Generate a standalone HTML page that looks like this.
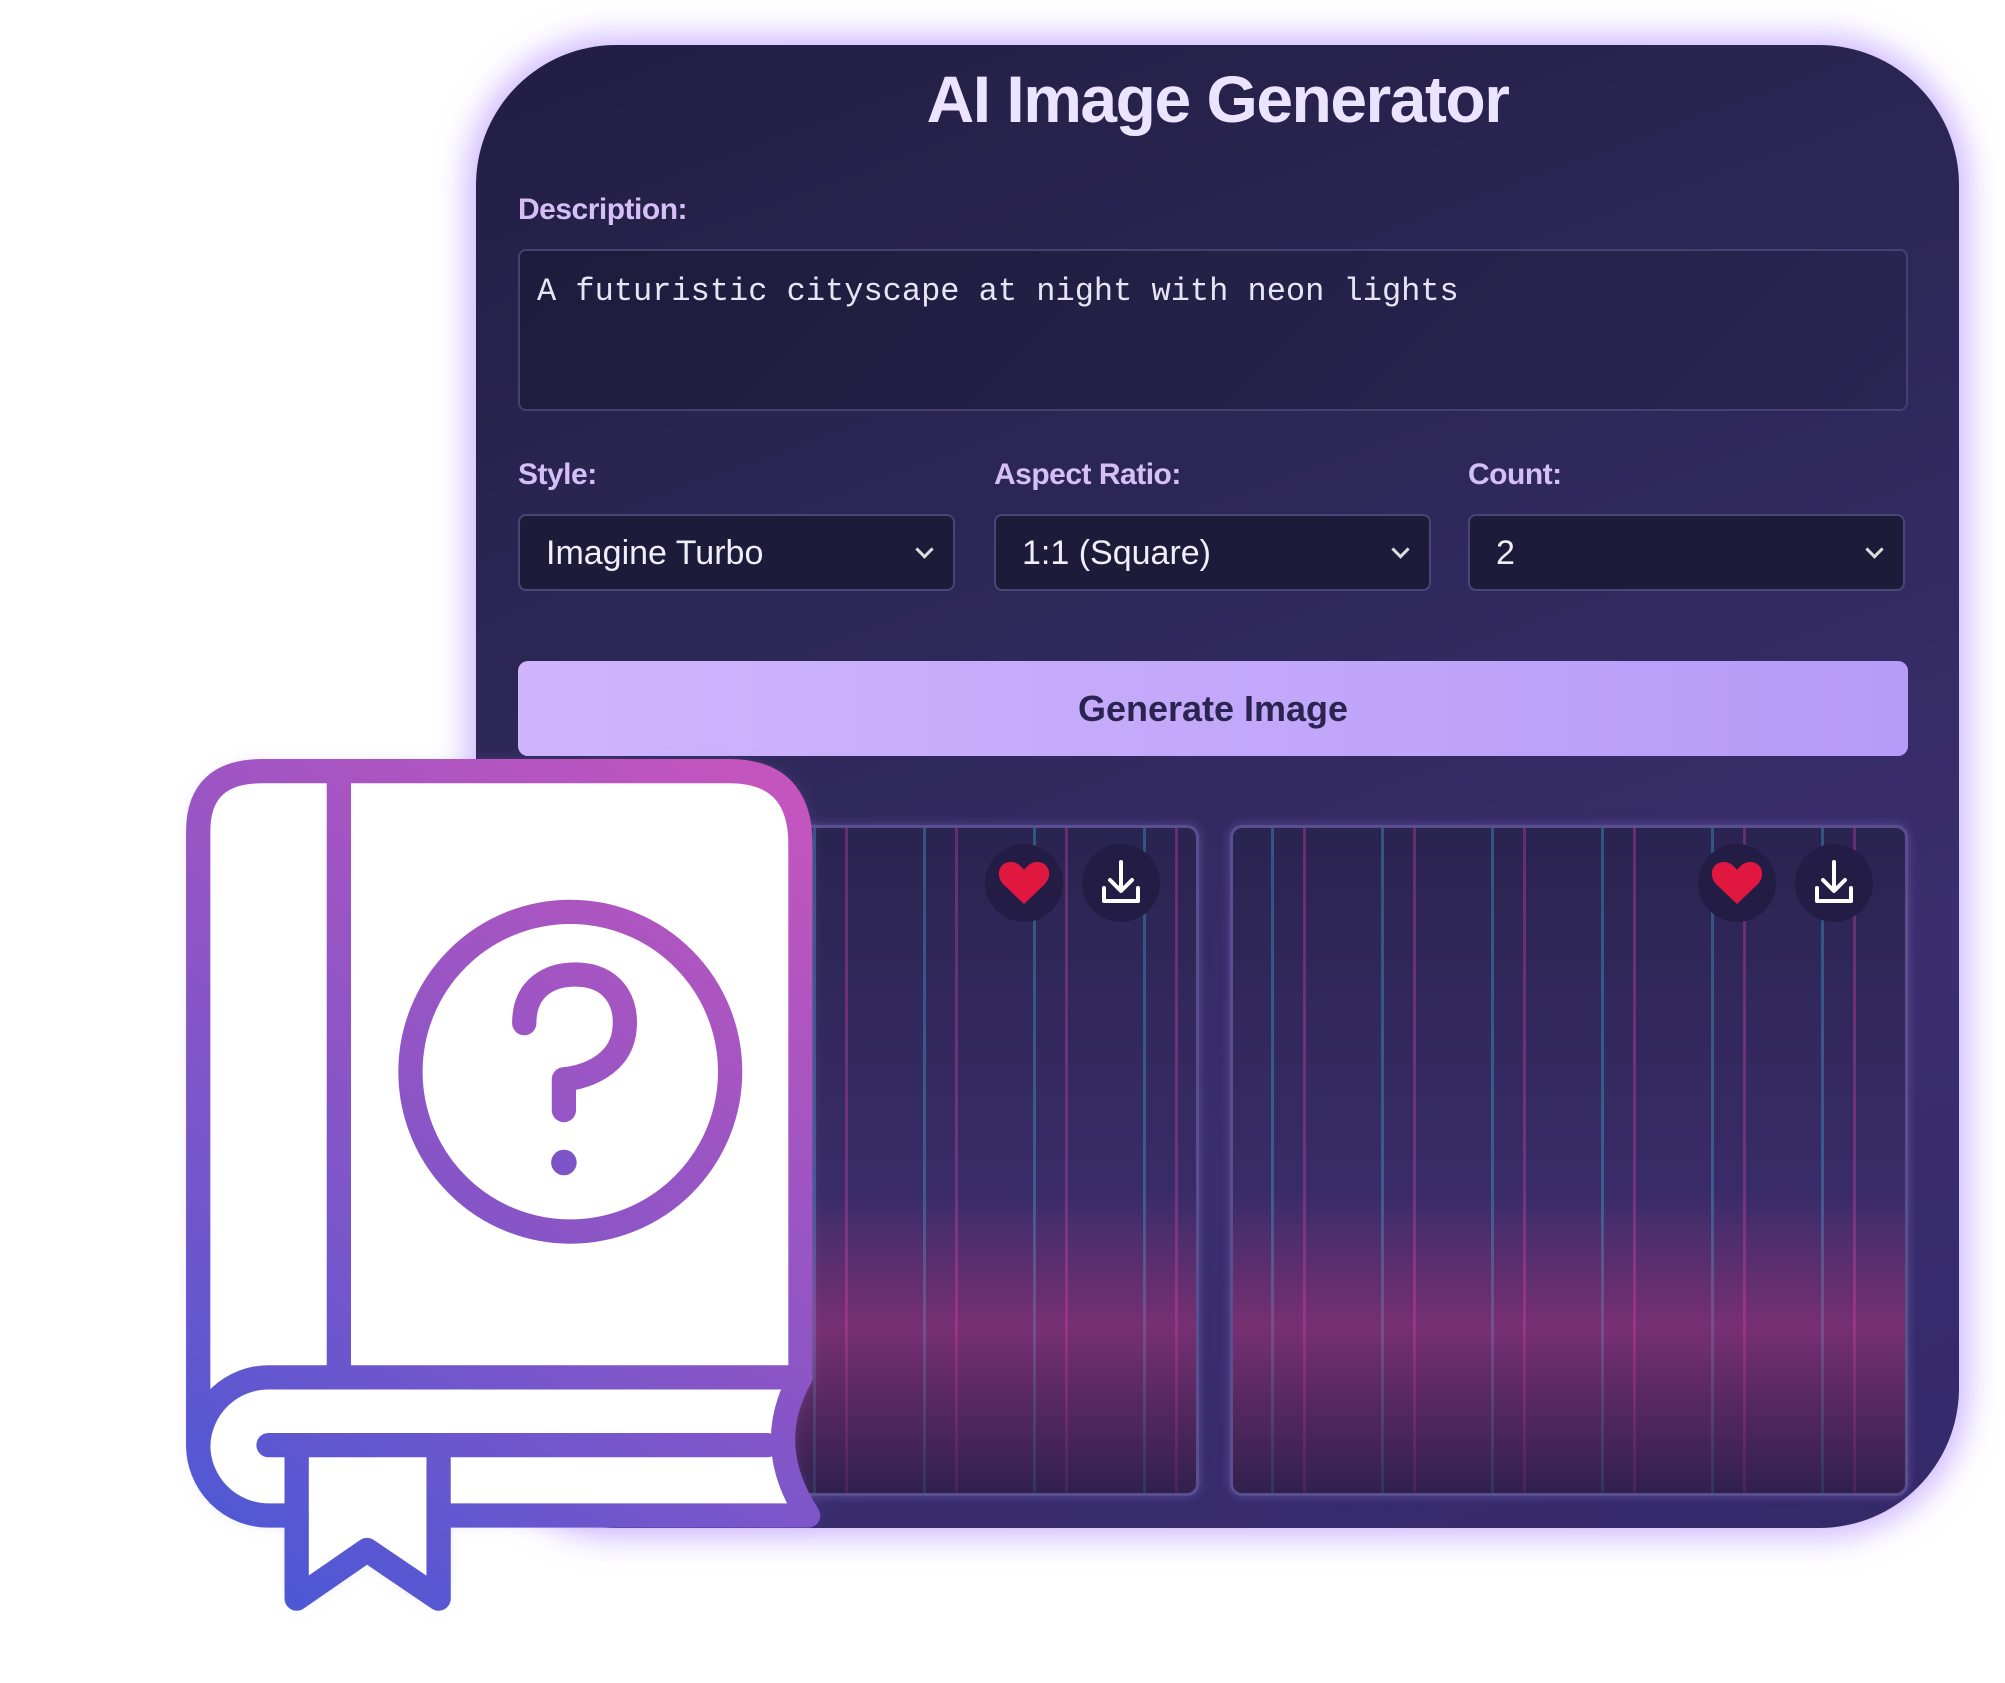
<!DOCTYPE html>
<html><head><meta charset="utf-8">
<style>
html,body{margin:0;padding:0;background:#fff;}
body{width:2005px;height:1683px;position:relative;overflow:hidden;font-family:"Liberation Sans",sans-serif;}
.panel{position:absolute;left:476px;top:45px;width:1483px;height:1483px;border-radius:140px;
background:linear-gradient(160deg,#221e42 0%,#2d2757 35%,#3a2e6e 70%,#34296a 100%);
box-shadow:0 0 30px 10px rgba(170,130,255,0.55);}
.title{position:absolute;left:0;width:100%;top:16px;text-align:center;color:#ece4ff;font-weight:bold;font-size:66px;letter-spacing:-1.5px;}
.lbl{position:absolute;color:#d4bff6;font-weight:bold;font-size:30px;letter-spacing:-0.5px;}
.ta{position:absolute;left:42px;top:204px;width:1386px;height:158px;border:2px solid #464070;border-radius:8px;background:linear-gradient(135deg,#1e1b3c,#2a2552);}
.ta span{position:absolute;left:17px;top:22px;color:#e8e4f4;font-family:"Liberation Mono",monospace;font-size:32px;}
.sel{position:absolute;top:469px;width:437px;height:77px;border:2px solid #4b4575;border-radius:8px;background:#1d1b39;color:#f0eef8;font-size:34px;line-height:75px;box-sizing:border-box;padding-left:26px;}
.sel:after{content:"";position:absolute;right:22px;top:27px;width:10px;height:10px;border-right:3px solid #ddd;border-bottom:3px solid #ddd;transform:rotate(45deg);}
.btn{position:absolute;left:42px;top:616px;width:1390px;height:95px;border-radius:10px;background:linear-gradient(90deg,#d0b5fc,#b69bf8);color:#2a2450;font-weight:bold;font-size:36px;text-align:center;line-height:95px;}
.card{position:absolute;top:780px;height:665px;border-radius:12px;border:3px solid #5a4f8e;overflow:hidden;box-shadow:0 0 10px rgba(150,120,230,.4);
background:
linear-gradient(180deg,rgba(40,30,80,0) 55%,rgba(230,60,140,.35) 75%,rgba(40,30,70,.6) 100%),
repeating-linear-gradient(90deg,transparent 0 38px,rgba(60,200,240,.3) 38px 41px,transparent 41px 70px,rgba(240,70,190,.3) 70px 73px,transparent 73px 110px),
linear-gradient(180deg,#2a2450,#3b2c6a 60%,#3d2458);}
.ic{position:absolute;top:16px;width:78px;height:78px;border-radius:50%;background:#231d45;}
</style></head><body>
<div class="panel">
 <div class="title">AI Image Generator</div>
 <div class="lbl" style="left:42px;top:148px">Description:</div>
 <div class="ta"><span>A futuristic cityscape at night with neon lights</span></div>
 <div class="lbl" style="left:42px;top:413px">Style:</div>
 <div class="lbl" style="left:518px;top:413px">Aspect Ratio:</div>
 <div class="lbl" style="left:992px;top:413px">Count:</div>
 <div class="sel" style="left:42px">Imagine Turbo</div>
 <div class="sel" style="left:518px">1:1 (Square)</div>
 <div class="sel" style="left:992px">2</div>
 <div class="btn">Generate Image</div>
 <div class="card" style="left:76px;width:641px">
  <div class="ic" style="left:430px"><svg width="78" height="78" viewBox="0 0 78 78"><path d="M39 60 L18 40 C10 31 14 18 26 18 C32 18 36 22 39 26 C42 22 46 18 52 18 C64 18 68 31 60 40 Z" fill="#e0173f"/></svg></div>
  <div class="ic" style="left:527px"><svg width="78" height="78" viewBox="0 0 78 78" fill="none" stroke="#fff" stroke-width="4" stroke-linecap="round" stroke-linejoin="round"><path d="M39 18 V46 M28 36 L39 47 L50 36 M22 44 V57 H56 V44"/></svg></div>
 </div>
 <div class="card" style="left:754px;width:672px">
  <div class="ic" style="left:465px"><svg width="78" height="78" viewBox="0 0 78 78"><path d="M39 60 L18 40 C10 31 14 18 26 18 C32 18 36 22 39 26 C42 22 46 18 52 18 C64 18 68 31 60 40 Z" fill="#e0173f"/></svg></div>
  <div class="ic" style="left:562px"><svg width="78" height="78" viewBox="0 0 78 78" fill="none" stroke="#fff" stroke-width="4" stroke-linecap="round" stroke-linejoin="round"><path d="M39 18 V46 M28 36 L39 47 L50 36 M22 44 V57 H56 V44"/></svg></div>
 </div>
</div>
<svg style="position:absolute;left:0;top:0" width="2005" height="1683" viewBox="0 0 1568 1316" preserveAspectRatio="none">
 <defs>
  <linearGradient id="g" gradientUnits="userSpaceOnUse" x1="630" y1="600" x2="170" y2="1250">
   <stop offset="0" stop-color="#c855bd"/><stop offset="0.5" stop-color="#8b55c6"/><stop offset="1" stop-color="#4858d6"/>
  </linearGradient>
  <filter id="f" x="-20%" y="-20%" width="140%" height="140%"><feDropShadow dx="0" dy="0" stdDeviation="8" flood-color="#a98bff" flood-opacity="0.8"/></filter>
 </defs>
 <g filter="url(#f)">
  <path d="M155 1130 V650 Q155 603 205 603 H570 Q626 603 626 660 V1077 Q596 1130 632 1185 H343 V1250 L287 1210 L232 1250 V1185 H210 A55 55 0 0 1 155 1130 Z" fill="#fff"/>
 </g>
 <g fill="none" stroke="url(#g)" stroke-width="19" stroke-linecap="round" stroke-linejoin="round">
  <path d="M155 1130 V650 Q155 603 205 603 H570 Q626 603 626 660 V1077"/>
  <path d="M265 603 V1077"/>
  <path d="M155 1130 A55 55 0 0 1 210 1077 H626 Q596 1130 632 1185 H343"/>
  <path d="M155 1130 A55 55 0 0 0 210 1185 H232"/>
  <path d="M210 1130 H600"/>
  <path d="M232 1135 V1250 L287 1212 L343 1250 V1135" stroke-linecap="butt"/>
  <circle cx="446" cy="838" r="125"/>
  <path d="M410 800 C410 772 430 762 450 762 C478 762 492 782 488 808 C484 832 460 842 441 844 V868"/>
 </g>
 <circle cx="441" cy="909" r="10" fill="#7d54c8"/>
</svg>
</body></html>
